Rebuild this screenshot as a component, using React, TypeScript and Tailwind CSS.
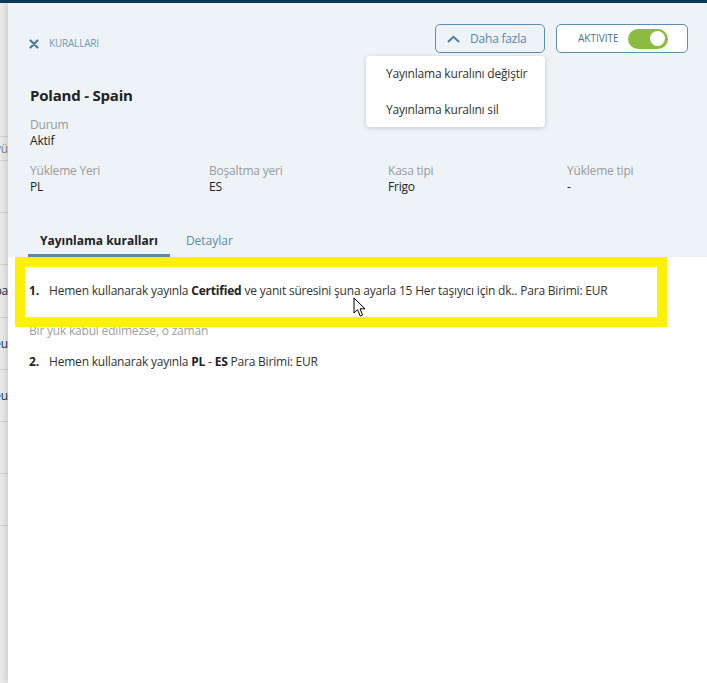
import { useState } from "react";

const font = { fontFamily: '"Open Sans", "Noto Sans", sans-serif', letterSpacing: "-0.2px" };

const stripRows: { h: string; text?: string; muted?: boolean }[] = [
  { h: "h-[134px]" },
  { h: "h-[24px]", text: "yü", muted: true },
  { h: "h-[52px]" },
  { h: "h-[52px]" },
  { h: "h-[53px]", text: "pa" },
  { h: "h-[52px]", text: "eu" },
  { h: "h-[52px]", text: "eu" },
  { h: "h-[52px]" },
  { h: "h-[52px]" },
];

const infoCols = [
  { label: "Yükleme Yeri", value: "PL" },
  { label: "Boşaltma yeri", value: "ES" },
  { label: "Kasa tipi", value: "Frigo" },
  { label: "Yükleme tipi", value: "-" },
];

const CloseIcon = () => (
  <svg width="10" height="10" viewBox="0 0 10 10">
    <path d="M1.5 1.5 L8.5 8.5 M8.5 1.5 L1.5 8.5" stroke="#4f7a9c" strokeWidth="2.2" strokeLinecap="round" />
  </svg>
);

const ChevronUp = () => (
  <svg width="13" height="8" viewBox="0 0 13 8">
    <path d="M1.5 6.5 L6.5 1.8 L11.5 6.5" stroke="#4e7fa6" strokeWidth="2" fill="none" strokeLinecap="round" />
  </svg>
);

const Cursor = () => (
  <svg width="14" height="21" viewBox="0 0 14 21">
    <path
      d="M1 1 L1 16 L4.5 12.6 L7.2 19 L9.6 18 L7 11.8 L12 11.8 Z"
      fill="white"
      stroke="black"
      strokeWidth="1"
      strokeLinejoin="round"
    />
  </svg>
);

const App = () => {
  const [active, setActive] = useState(true);
  const [tab, setTab] = useState("rules");

  return (
    <div className="w-[707px] h-[683px] overflow-hidden flex flex-col bg-white text-[#333]" style={font}>
      <div className="h-[3px] bg-[#0c3a59] shrink-0" />
      <div className="flex flex-1 min-h-0">
        {/* page behind the panel */}
        <div className="w-[8px] shrink-0 bg-[#ebebeb] flex flex-col overflow-hidden">
          {stripRows.map((r, i) => (
            <div
              key={i}
              className={`${r.h} shrink-0 border-b border-[#d2d4d7] flex items-center justify-end overflow-hidden whitespace-nowrap text-[12px] ${
                r.muted ? "text-[#8a8a8a]" : "text-[#1d2b3a]"
              }`}
            >
              {r.text}
            </div>
          ))}
        </div>

        {/* side panel */}
        <div className="relative flex-1 min-w-0 flex flex-col shadow-[-3px_0_6px_rgba(0,0,0,0.12)] bg-white">
          <div className="bg-[#eef3f7] pl-[21px] pr-[19px] pt-[21px]">
            <div className="flex items-start justify-between">
              <button className="mt-[12px] flex items-center gap-[10px] text-[10px] text-[#6f98ba] uppercase">
                <CloseIcon />
                <span>Kuralları</span>
              </button>
              <div className="relative flex items-center gap-[11px]">
                <button className="w-[110px] h-[29px] border border-[#5d8db3] rounded-[5px] flex items-center pl-[11px] gap-[10px] text-[12px] text-[#5a87ac] bg-[#eef3f7]">
                  <ChevronUp />
                  <span>Daha fazla</span>
                </button>
                <div className="w-[132px] h-[29px] border border-[#5d8db3] rounded-[5px] flex items-center pl-[21px] gap-[9px] bg-white">
                  <span className="text-[10px] tracking-normal text-[#4a6f90]">AKTIVITE</span>
                  <button
                    onClick={() => setActive(!active)}
                    className={`w-[40px] h-[20px] rounded-full flex items-center px-[3px] ${
                      active ? "bg-[#8dbb41] justify-end" : "bg-[#c9cfd5] justify-start"
                    }`}
                  >
                    <span className="w-[15px] h-[15px] rounded-full bg-white" />
                  </button>
                </div>
                <div className="absolute left-[-69px] top-[32px] w-[179px] bg-white rounded-[4px] shadow-[0_1px_5px_rgba(0,0,0,0.18)] text-[12px] text-[#333] z-10">
                  <div className="h-[35px] flex items-center pl-[20px]">Yayınlama kuralını değiştir</div>
                  <div className="h-[35px] flex items-center pl-[20px] mt-[1px]">Yayınlama kuralını sil</div>
                </div>
              </div>
            </div>

            <h1 className="mt-[32px] ml-[1px] text-[15px] leading-[20px] font-bold text-[#222]">Poland - Spain</h1>

            <div className="mt-[12px] ml-[1px] text-[12px] leading-[16px]">
              <div className="text-[#9a9a9a]">Durum</div>
              <div className="text-[#222]">Aktif</div>
            </div>

            <div className="mt-[14px] ml-[1px] grid grid-cols-[179px_179px_179px_1fr] text-[12px] leading-[16px]">
              {infoCols.map((c) => (
                <div key={c.label} className="whitespace-nowrap">
                  <div className="text-[#9a9a9a]">{c.label}</div>
                  <div className="text-[#222]">{c.value}</div>
                </div>
              ))}
            </div>

            <div className="mt-[38px] ml-[-1px] flex gap-[4px] text-[12px] leading-[16px] tracking-normal">
              <button
                onClick={() => setTab("rules")}
                className={`px-[12px] pb-[5px] border-b-[3px] ${
                  tab === "rules" ? "border-[#5a8aa8] font-bold text-[#222]" : "border-transparent text-[#5a8ab5]"
                }`}
              >
                Yayınlama kuralları
              </button>
              <button
                onClick={() => setTab("details")}
                className={`px-[12px] pb-[5px] border-b-[3px] ${
                  tab === "details" ? "border-[#5a8aa8] font-bold text-[#222]" : "border-transparent text-[#5a8ab5]"
                }`}
              >
                Detaylar
              </button>
            </div>
          </div>

          <div className="pl-[21px] pt-[26px] text-[12px] leading-[16px] text-[#333]">
            <div className="flex">
              <span className="w-[20px] font-bold text-[#222]">1.</span>
              <span>
                Hemen kullanarak yayınla <b className="text-[#222]">Certified</b> ve yanıt süresini şuna ayarla 15 Her
                taşıyıcı için dk.. Para Birimi: EUR
              </span>
            </div>
            <div className="mt-[24px] text-[#a0a0a0]">Bir yük kabul edilmezse, o zaman</div>
            <div className="flex mt-[15px]">
              <span className="w-[20px] font-bold text-[#222]">2.</span>
              <span>
                Hemen kullanarak yayınla <b className="text-[#222]">PL</b> - <b className="text-[#222]">ES</b> Para
                Birimi: EUR
              </span>
            </div>
          </div>

          {/* highlight annotation */}
          <div className="absolute left-[7px] top-[254px] w-[652px] h-[70px] border-[10px] border-[#fff200] pointer-events-none" />
          <div className="absolute left-[345px] top-[294px] pointer-events-none">
            <Cursor />
          </div>
        </div>
      </div>
    </div>
  );
};

export default App;
